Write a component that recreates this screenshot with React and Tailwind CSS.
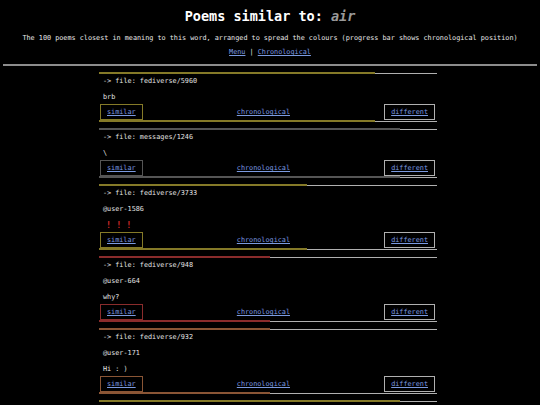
const poems = [
  { file: "fediverse/5960", lines: ["brb"], color: "#857a28", pos: 276 },
  { file: "messages/1246", lines: ["\\"], color: "#555555", pos: 301 },
  { file: "fediverse/3733", lines: ["@user-1586", "!!!"], color: "#857a28", pos: 208 },
  { file: "fediverse/948", lines: ["@user-664", "why?"], color: "#8a2c2c", pos: 171 },
  { file: "fediverse/932", lines: ["@user-171", "Hi : )"], color: "#8a5535", pos: 171 },
  { file: "fediverse/4410", lines: ["ok"], color: "#857a28", pos: 301 },
];

const Bar = ({ color, pos }) => (
  <div className="flex h-[2px] items-center">
    <div className="h-[2px]" style={{ width: pos, backgroundColor: color }} />
    <div className="h-px flex-1 bg-[#b0b0b0]" />
  </div>
);

const Poem = ({ poem }) => (
  <div className="flex flex-col">
    <Bar color={poem.color} pos={poem.pos} />
    <div className="mt-[2px] flex flex-col gap-[6px] px-[4px]">
      <p className="h-[10px] leading-[10px]">-&gt; file: {poem.file}</p>
      {poem.lines.map((line, i) =>
        line === "!!!" ? (
          <p key={i} className="flex h-[10px] gap-[5px] pl-[3px] text-[8.5px] font-bold leading-[10px] text-[#d42a2a]">
            <span>!</span>
            <span>!</span>
            <span>!</span>
          </p>
        ) : (
          <p key={i} className="h-[10px] leading-[10px]">
            {line}
          </p>
        )
      )}
    </div>
    <div className="mt-[2px] flex h-[16px] items-stretch pl-px pr-[2px]">
      <a
        href="#"
        className="flex items-center border px-[6px] pt-px text-[#7b9ae0] underline"
        style={{ borderColor: poem.color }}
      >
        similar
      </a>
      <div className="flex flex-1 items-center justify-center pt-px">
        <a href="#" className="text-[#7b9ae0] underline">
          chronological
        </a>
      </div>
      <a
        href="#"
        className="flex items-center border border-[#b0b0b0] px-[6px] pt-px text-[#7b9ae0] underline"
      >
        different
      </a>
    </div>
    <Bar color={poem.color} pos={poem.pos} />
  </div>
);

export default function App() {
  return (
    <div className="min-h-screen bg-black pb-8 font-['DejaVu_Sans_Mono',monospace] text-[6.8px] text-[#e4e4e4]">
      <h1 className="pt-[8px] text-center text-[13.5px] font-bold leading-[16px] text-white">
        Poems similar to: <span className="italic text-[#9a9a9a]">air</span>
      </h1>
      <p className="mt-[9px] text-center leading-[10px] text-[#e8e8e8]">
        The 100 poems closest in meaning to this word, arranged to spread the colours (progress bar shows chronological position)
      </p>
      <p className="mt-[4px] text-center leading-[10px]">
        <a href="#" className="text-[#7b9ae0] underline">
          Menu
        </a>{" "}
        |{" "}
        <a href="#" className="text-[#7b9ae0] underline">
          Chronological
        </a>
      </p>
      <div className="mx-[3px] mt-[7px] h-[2px] bg-[#8c8c8c]" />
      <div className="pr-[4px]">
        <div className="mx-auto mt-[6px] flex w-[338px] flex-col gap-[6px]">
          {poems.map((p, i) => (
            <Poem key={i} poem={p} />
          ))}
        </div>
      </div>
    </div>
  );
}
